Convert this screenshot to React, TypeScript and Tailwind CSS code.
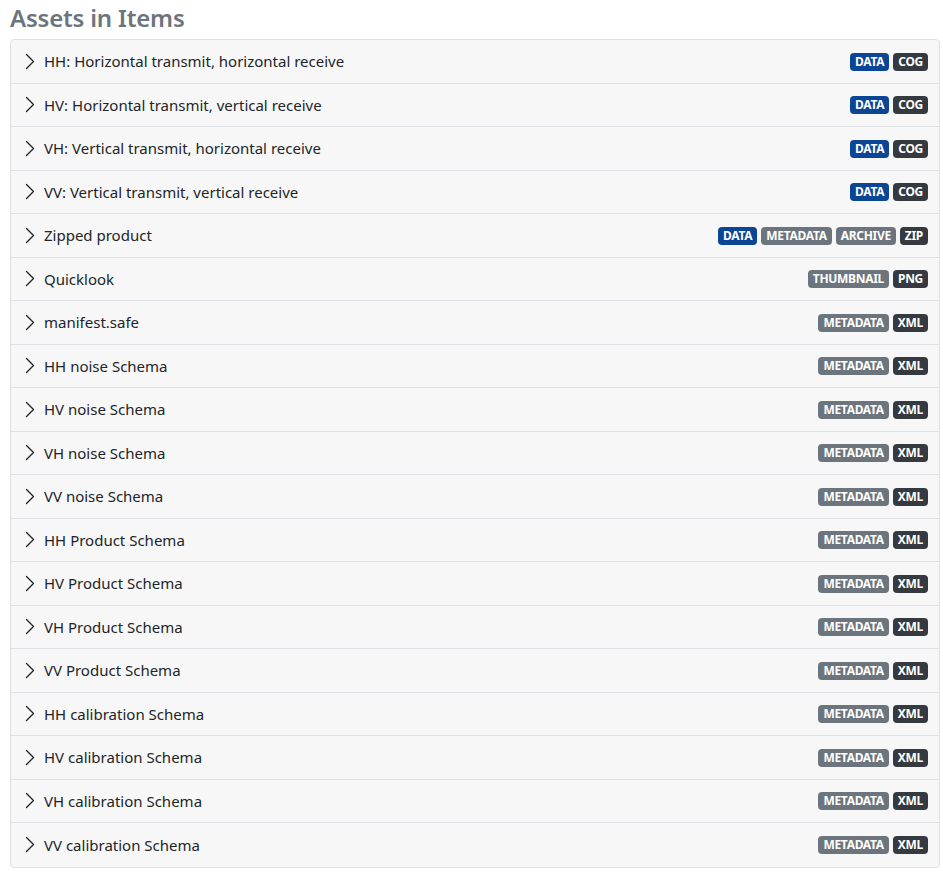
import React from "react";

type Badge = { label: string; tone: "blue" | "gray" | "dark" };

const D: Badge = { label: "DATA", tone: "blue" };
const COG: Badge = { label: "COG", tone: "dark" };
const META: Badge = { label: "METADATA", tone: "gray" };
const XML: Badge = { label: "XML", tone: "dark" };

const assets: { title: string; badges: Badge[] }[] = [
  { title: "HH: Horizontal transmit, horizontal receive", badges: [D, COG] },
  { title: "HV: Horizontal transmit, vertical receive", badges: [D, COG] },
  { title: "VH: Vertical transmit, horizontal receive", badges: [D, COG] },
  { title: "VV: Vertical transmit, vertical receive", badges: [D, COG] },
  {
    title: "Zipped product",
    badges: [D, META, { label: "ARCHIVE", tone: "gray" }, { label: "ZIP", tone: "dark" }],
  },
  { title: "Quicklook", badges: [{ label: "THUMBNAIL", tone: "gray" }, { label: "PNG", tone: "dark" }] },
  { title: "manifest.safe", badges: [META, XML] },
  { title: "HH noise Schema", badges: [META, XML] },
  { title: "HV noise Schema", badges: [META, XML] },
  { title: "VH noise Schema", badges: [META, XML] },
  { title: "VV noise Schema", badges: [META, XML] },
  { title: "HH Product Schema", badges: [META, XML] },
  { title: "HV Product Schema", badges: [META, XML] },
  { title: "VH Product Schema", badges: [META, XML] },
  { title: "VV Product Schema", badges: [META, XML] },
  { title: "HH calibration Schema", badges: [META, XML] },
  { title: "HV calibration Schema", badges: [META, XML] },
  { title: "VH calibration Schema", badges: [META, XML] },
  { title: "VV calibration Schema", badges: [META, XML] },
];

const toneClass = {
  blue: "bg-[#0b4596]",
  gray: "bg-[#6c757d]",
  dark: "bg-[#343a40]",
};

const Chevron = () => (
  <svg width="10" height="17" viewBox="0 0 10 17" fill="none" className="shrink-0">
    <path d="M1.5 1.5 L8.5 8.5 L1.5 15.5" stroke="#212529" strokeWidth="1.4" strokeLinecap="round" strokeLinejoin="round" />
  </svg>
);

export default function App() {
  return (
    <div className="bg-white px-[10px] pt-[1px] font-['Noto_Sans',sans-serif] text-[#212529]">
      <h2 className="text-[24px] leading-[34px] font-semibold text-[#6c757d] mb-[4px] tracking-[-0.2px]">Assets in Items</h2>
      <div className="w-[930px] border border-[#dee2e6] rounded-[4px] bg-[#f7f7f7]">
        {assets.map((a, i) => (
          <div
            key={a.title}
            className={`flex items-center h-[43.5px] pl-[14px] pr-[11px] ${i < assets.length - 1 ? "border-b border-[#dee2e6]" : ""}`}
          >
            <Chevron />
            <span className="ml-[9px] text-[15px] flex-1">{a.title}</span>
            <div className="flex gap-[4px] mt-[1px]">
              {a.badges.map((b, j) => (
                <span
                  key={j}
                  className={`${toneClass[b.tone]} text-white text-[12px] font-bold leading-none tracking-[-0.3px] px-[5px] py-[3px] rounded-[4px]`}
                >
                  {b.label}
                </span>
              ))}
            </div>
          </div>
        ))}
      </div>
    </div>
  );
}
